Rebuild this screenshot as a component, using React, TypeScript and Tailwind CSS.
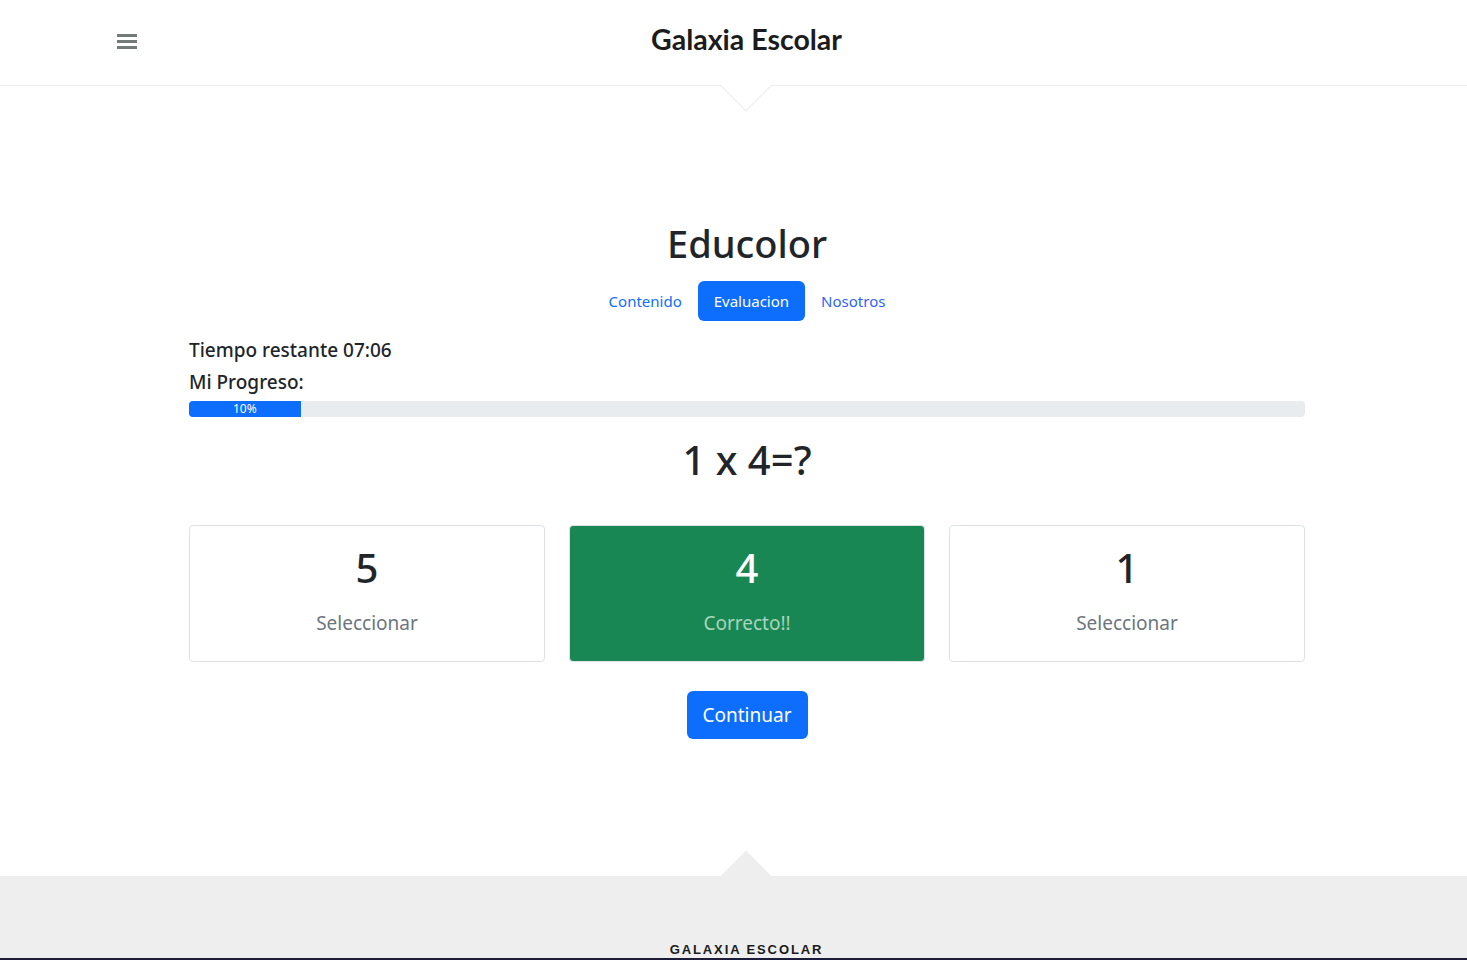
import React from 'react';

const options = [
  { value: 5, label: 'Seleccionar', correct: false },
  { value: 4, label: 'Correcto!!', correct: true },
  { value: 1, label: 'Seleccionar', correct: false },
];

export default function App() {
  const progress = 10;

  return (
    <div className="min-h-screen bg-white text-[#212529] font-['Noto_Sans','Liberation_Sans',sans-serif]">
      {/* Header */}
      <header className="relative h-[86px] border-b border-[#ededed] bg-white">
        <div className="flex h-[78px] items-center pl-[117px] pr-[91px]">
          <button className="mt-[5px] flex w-5 flex-col gap-[3px]" aria-label="menu">
            <span className="block h-[3px] w-5 bg-[#757b78]" />
            <span className="block h-[3px] w-5 bg-[#757b78]" />
            <span className="block h-[3px] w-5 bg-[#757b78]" />
          </button>
          <div className="flex-1 text-center">
            <span className="text-[28.5px] font-bold text-[#1c1c1c] font-['Lato','Liberation_Sans',sans-serif]">
              Galaxia Escolar
            </span>
          </div>
          <div className="w-5" />
        </div>
        <div className="absolute left-[746px] bottom-[-19px] h-[36px] w-[36px] -translate-x-1/2 rotate-45 border-r border-b border-[#ededed] bg-white" />
      </header>

      {/* Main */}
      <main className="ml-[189px] w-[1116px] pt-[133px] pb-[137px]">
        <h1 className="text-center text-[38px] leading-[48px] font-medium">Educolor</h1>

        <nav className="mt-[14px] flex justify-center">
          <a className="px-4 py-2 text-[15px] leading-6 text-[#0d6efd]">Contenido</a>
          <a className="rounded-[6px] bg-[#0d6efd] px-4 py-2 text-[15px] leading-6 text-white">Evaluacion</a>
          <a className="px-4 py-2 text-[15px] leading-6 text-[#2f63f7]">Nosotros</a>
        </nav>

        <div className="mt-[17px] text-[19px] leading-6 font-medium">Tiempo restante 07:06</div>
        <div className="mt-2 text-[19px] leading-6 font-medium">Mi Progreso:</div>

        <div className="mt-[7px] flex h-4 overflow-hidden rounded-[4px] bg-[#e9ecef]">
          <div
            className="flex items-center justify-center bg-[#0d6efd] text-[12px] leading-none text-white"
            style={{ width: `${progress}%` }}
          >
            {progress}%
          </div>
        </div>

        <h2 className="mt-[19px] text-center text-[40px] leading-[48px] font-medium">1 x 4=?</h2>

        <div className="mt-[41px] grid grid-cols-3 gap-6">
          {options.map((opt) => (
            <div
              key={opt.value}
              className={`flex flex-col items-center rounded-[4px] border border-[#dee2e6] pt-[18px] pb-[26px] ${
                opt.correct ? 'bg-[#198754]' : 'bg-white'
              }`}
            >
              <div className={`text-[40px] leading-[48px] font-medium ${opt.correct ? 'text-white' : 'text-[#212529]'}`}>
                {opt.value}
              </div>
              <div className={`mt-[19px] text-[19px] leading-6 ${opt.correct ? 'text-[#a8d5bb]' : 'text-[#6c757d]'}`}>
                {opt.label}
              </div>
            </div>
          ))}
        </div>

        <div className="mt-[29px] flex justify-center">
          <button className="h-12 rounded-[6px] bg-[#0d6efd] px-4 text-[19px] text-white">Continuar</button>
        </div>
      </main>

      {/* Footer */}
      <footer className="relative bg-[#eeeeee]">
        <div className="absolute left-[746px] top-[-18px] h-[36px] w-[36px] -translate-x-1/2 rotate-45 bg-[#eeeeee]" />
        <div className="w-[1493px] pt-[64px] text-center leading-[16px]">
          <span className="text-[13px] font-bold tracking-[1.9px] text-[#1a1a1a] font-['Liberation_Sans',sans-serif]">
            GALAXIA ESCOLAR
          </span>
        </div>
        <div className="h-[40px] border-t-2 border-[#1d1b3a] bg-[#eeeeee]" />
      </footer>
    </div>
  );
}
